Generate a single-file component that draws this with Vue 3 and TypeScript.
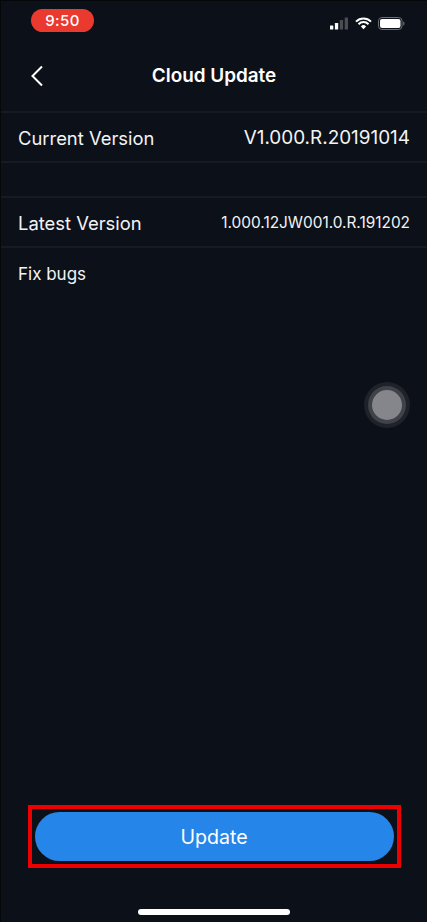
<script setup lang="ts">
const rows = [
  { label: 'Current Version', value: 'V1.000.R.20191014', small: false },
  { label: 'Latest Version', value: '1.000.12JW001.0.R.191202', small: true },
]
</script>

<template>
  <div class="screen">
    <div class="status">
      <div class="time">9:50</div>
      <div class="indicators">
        <svg class="signal" width="18" height="13" viewBox="0 0 18 13">
          <rect x="0" y="8.5" width="3.3" height="4" rx="0.6" fill="#fff" />
          <rect x="4.9" y="6" width="3.3" height="6.5" rx="0.6" fill="#fff" />
          <rect x="9.8" y="3" width="3.3" height="9.5" rx="0.6" fill="#4a4d52" />
          <rect x="14.7" y="0.5" width="3.3" height="12" rx="0.6" fill="#4a4d52" />
        </svg>
        <svg class="wifi" width="17" height="13" viewBox="0 0 17 13">
          <path d="M1 4.6a10.6 10.6 0 0 1 15 0M3.5 7.2a7 7 0 0 1 10 0" fill="none" stroke="#fff" stroke-width="2" />
          <path d="M5.9 9.4a3.7 3.7 0 0 1 5.2 0L8.5 12.2z" fill="#fff" />
        </svg>
        <svg class="battery" width="27" height="13" viewBox="0 0 27 13">
          <rect x="0.5" y="0.5" width="23.5" height="12" rx="3.4" fill="none" stroke="#6b6e72" />
          <rect x="2" y="2" width="20.5" height="9" rx="2" fill="#fff" />
          <path d="M25.2 4.5c.9.3 1.3 1.1 1.3 2s-.4 1.7-1.3 2z" fill="#6b6e72" />
        </svg>
      </div>
    </div>

    <header class="nav">
      <svg class="back" width="14" height="22" viewBox="0 0 14 22">
        <path d="M12 1.5 2.5 11l9.5 9.5" fill="none" stroke="#fff" stroke-width="2" />
      </svg>
      <h1 class="title">Cloud Update</h1>
    </header>

    <section class="list">
      <template v-for="(row, i) in rows" :key="row.label">
        <div class="row">
          <span class="label">{{ row.label }}</span>
          <span class="value" :class="{ small: row.small }">{{ row.value }}</span>
        </div>
        <div v-if="i === 0" class="spacer"></div>
      </template>
    </section>

    <p class="notes">Fix bugs</p>

    <div class="assistive" aria-hidden="true">
      <div class="assistive-mid"><div class="assistive-core"></div></div>
    </div>

    <div class="footer">
      <div class="highlight">
        <button class="update" type="button">Update</button>
      </div>
    </div>

    <div class="home-wrap"><div class="home"></div></div>
  </div>
</template>

<style scoped>
.screen {
  position: relative;
  width: 427px;
  height: 922px;
  overflow: hidden;
  display: flex;
  flex-direction: column;
  background: #0c1018;
  color: #fff;
  font-family: Inter, "Liberation Sans", sans-serif;
  box-sizing: border-box;
  border-left: 1px solid #05070b;
  border-top: 1px solid #05070b;
}
.status {
  height: 40px;
  flex: none;
  box-sizing: border-box;
  padding: 8px 22px 0 30px;
  display: flex;
  justify-content: space-between;
  align-items: flex-start;
}
.time {
  width: 63px;
  height: 23px;
  border-radius: 12px;
  background: #ea3a30;
  display: flex;
  align-items: center;
  justify-content: center;
  font-size: 15px;
  font-weight: 500;
  letter-spacing: 0.4px;
}
.indicators {
  display: flex;
  align-items: center;
  gap: 6.5px;
  margin-top: 8px;
}
.nav {
  position: relative;
  height: 72px;
  flex: none;
  box-sizing: border-box;
  border-bottom: 2px solid #161b23;
  display: flex;
  align-items: center;
  justify-content: center;
}
.back {
  position: absolute;
  left: 29px;
  top: 24px;
}
.title {
  margin: 0 0 2px;
  font-size: 18.9px;
  font-weight: 600;
}
.list {
  flex: none;
}
.row {
  height: 50px;
  box-sizing: border-box;
  padding: 1px 17px 0 17px;
  display: flex;
  align-items: center;
  justify-content: space-between;
  border-bottom: 2px solid #161b23;
}
.spacer {
  height: 35px;
  box-sizing: border-box;
  border-bottom: 2px solid #161b23;
}
.label {
  font-size: 18.4px;
  color: #f2f3f4;
}
.value {
  font-size: 18.9px;
  color: #f2f3f4;
}
.value.small {
  font-size: 15.4px;
}
.notes {
  margin: 16px 0 0 17px;
  font-size: 17px;
  line-height: 20px;
  color: #f2f3f4;
}
.assistive {
  position: absolute;
  left: 363px;
  top: 381px;
  width: 46px;
  height: 46px;
  border-radius: 50%;
  background: #1f2228;
  display: flex;
  align-items: center;
  justify-content: center;
}
.assistive-mid {
  width: 38px;
  height: 38px;
  border-radius: 50%;
  background: #3f4248;
  display: flex;
  align-items: center;
  justify-content: center;
}
.assistive-core {
  width: 30px;
  height: 30px;
  border-radius: 50%;
  background: #85868b;
}
.footer {
  margin-top: auto;
  display: flex;
  justify-content: center;
}
.highlight {
  width: 373px;
  height: 63px;
  box-sizing: border-box;
  border: 4px solid #ee0000;
  padding: 3px;
}
.update {
  display: block;
  width: 100%;
  height: 100%;
  border: 0;
  border-radius: 25px;
  background: #2585e9;
  color: #fff;
  font-family: inherit;
  font-size: 19.6px;
  padding: 0;
}
.home-wrap {
  height: 54px;
  flex: none;
  display: flex;
  justify-content: center;
  padding-top: 41px;
  box-sizing: border-box;
}
.home {
  width: 152px;
  height: 6px;
  border-radius: 3px;
  background: #fff;
}
</style>
